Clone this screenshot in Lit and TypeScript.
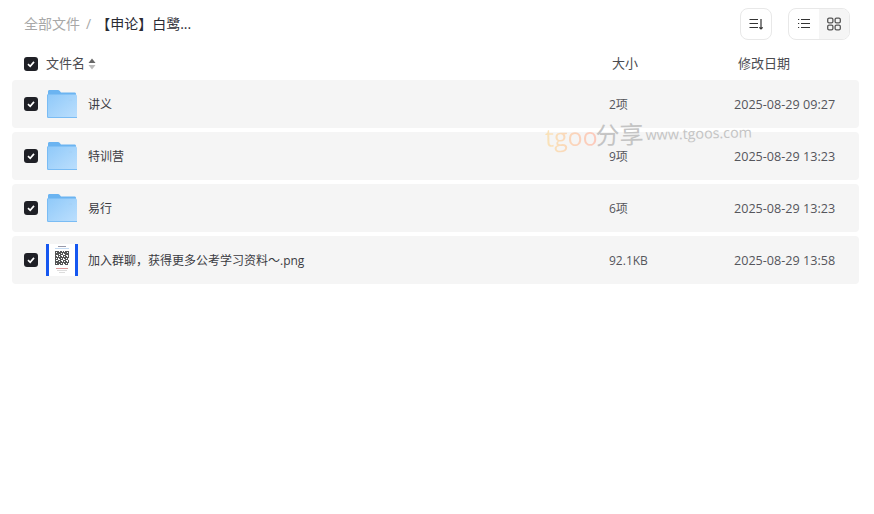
import { LitElement, html, css, svg } from "lit";
import { customElement } from "lit/decorators.js";

const rows = [
  { name: "讲义", size: "2项", date: "2025-08-29 09:27", kind: "folder" },
  { name: "特训营", size: "9项", date: "2025-08-29 13:23", kind: "folder" },
  { name: "易行", size: "6项", date: "2025-08-29 13:23", kind: "folder" },
  { name: "加入群聊，获得更多公考学习资料～.png", size: "92.1KB", date: "2025-08-29 13:58", kind: "image" },
];

const qrCells = () => {
  const out = [];
  const n = 14;
  for (let y = 0; y < n; y++) {
    for (let x = 0; x < n; x++) {
      const finder = (x < 4 && y < 4) || (x > 9 && y < 4) || (x < 4 && y > 9);
      const on = finder
        ? !(x === 1 && y === 1) && !(x === 12 && y === 1) && !(x === 1 && y === 12)
        : (x * 7 + y * 5 + x * y * 3) % 5 < 3;
      if (on) out.push(svg`<rect x=${9 + x} y=${7 + y} width="1" height="1" fill="#555"></rect>`);
    }
  }
  return out;
};

@customElement("app-root")
export class AppRoot extends LitElement {
  static styles = css`
    :host {
      display: block;
      position: relative;
      width: 874px;
      height: 514px;
      overflow: hidden;
      background: #fff;
      font-family: "Open Sans", "Noto Sans CJK SC", sans-serif;
      font-size: 13px;
      color: #25262b;
    }
    .page {
      display: flex;
      flex-direction: column;
      padding: 8px 15px 0 12px;
    }
    .toolbar {
      display: flex;
      align-items: center;
      height: 32px;
      padding-left: 12px;
    }
    .crumbs {
      display: flex;
      align-items: center;
      flex: 1;
      font-size: 14px;
      line-height: 32px;
    }
    .root { color: #a8a8a8; }
    .sep { color: #a8a8a8; margin: 0 5px 0 6px; }
    .current { color: #2a2b33; }
    .btn {
      display: flex;
      align-items: center;
      justify-content: center;
      width: 30px;
      height: 30px;
      border: 1px solid #e8e8e8;
      border-radius: 8px;
      background: #fff;
    }
    .switch {
      display: flex;
      width: 60px;
      height: 30px;
      margin-left: 16px;
      margin-right: 9px;
      border: 1px solid #e8e8e8;
      border-radius: 8px;
      overflow: hidden;
    }
    .switch > div {
      display: flex;
      align-items: center;
      justify-content: center;
      width: 30px;
    }
    .switch .off { background: #f5f5f5; }
    .head {
      display: grid;
      grid-template-columns: 588px 126px 1fr;
      align-items: center;
      height: 32px;
      padding: 8px 0 0 12px;
      color: #4b4b50;
      line-height: 18px;
    }
    .head-text { margin-top: -2px; }
    .name-h { display: flex; align-items: center; }
    .check {
      display: flex;
      align-items: center;
      justify-content: center;
      flex: none;
      width: 14px;
      height: 14px;
      border-radius: 3px;
      background: #1f2026;
    }
    .name-h span { margin-left: 8px; }
    .sort { margin-left: 3px; }
    .list { display: flex; flex-direction: column; gap: 4px; }
    .row {
      display: grid;
      grid-template-columns: 585px 125px 1fr;
      align-items: center;
      height: 48px;
      padding-left: 12px;
      background: #f5f5f5;
      border-radius: 4px;
      font-size: 12px;
      line-height: 18px;
    }
    .cell { display: flex; align-items: center; }
    .thumb {
      display: flex;
      align-items: center;
      justify-content: center;
      width: 32px;
      height: 32px;
      margin: 0 10px 0 8px;
    }
    .name { color: #3a3b42; margin-top: 2px; }
    .meta { color: #55565c; margin-top: 2px; }
    .date { font-size: 12.6px; }
    .mark {
      position: absolute;
      left: 545px;
      top: 116px;
      display: flex;
      align-items: center;
      transform: rotate(-1.5deg);
      white-space: nowrap;
      pointer-events: none;
    }
    .tg {
      font-size: 25px;
      line-height: 36px;
      background: linear-gradient(90deg, #f9e3b8, #fcc8bc);
      -webkit-background-clip: text;
      background-clip: text;
      color: transparent;
    }
    .fx { font-size: 24px; line-height: 36px; color: #c4c4c4; margin-left: -2px; }
    .url { font-size: 14.3px; color: #c4c4c4; margin-left: 2px; }
  `;

  private check() {
    return html`<div class="check">
      <svg width="10" height="10" viewBox="0 0 10 10"><path d="M2 5.2 4.2 7.3 8 2.9" fill="none" stroke="#fff" stroke-width="1.7"></path></svg>
    </div>`;
  }

  private folder() {
    return html`<svg width="30" height="28" viewBox="0 0 30 28">
      <defs>
        <linearGradient id="fg" x1="0" y1="0" x2="1" y2="1">
          <stop offset="0" stop-color="#8fc9f9"></stop>
          <stop offset="1" stop-color="#bcdffd"></stop>
        </linearGradient>
      </defs>
      <path d="M1 1.5C1 .7 1.6 0 2.4 0H11c.7 0 1.2.3 1.6.8L14 2.5H27.6c.8 0 1.4.6 1.4 1.4V10H1Z" fill="#6bb4f1"></path>
      <path d="M0 4.5H28.5c.8 0 1.5.7 1.5 1.5V26.5c0 .8-.7 1.5-1.5 1.5H1.5C.7 28 0 27.3 0 26.5Z" fill="url(#fg)"></path>
      <path d="M0 4.5V26.5C0 27.3.7 28 1.5 28H30V27H2C1.4 27 1 26.6 1 26V5Z" fill="#7abcf4"></path>
      <rect x="22" y="9" width="3" height="2" fill="#a5d2f8"></rect>
    </svg>`;
  }

  private poster() {
    return html`<svg width="32" height="32" viewBox="0 0 32 32">
      <rect width="32" height="32" fill="#fff"></rect>
      <rect width="3" height="32" fill="#1557f0"></rect>
      <rect x="29" width="3" height="32" fill="#1557f0"></rect>
      <rect x="12" y="2" width="8" height="1" fill="#99a"></rect>
      <rect x="9" y="4" width="14" height="1" fill="#c4daf2"></rect>
      ${qrCells()}
      <rect x="10" y="24" width="12" height="1" fill="#d99"></rect>
      <rect x="11" y="26" width="10" height="1" fill="#ddd"></rect>
      <rect x="13" y="28" width="6" height="1" fill="#ddd"></rect>
    </svg>`;
  }

  render() {
    return html`
      <div class="page">
        <div class="toolbar">
          <div class="crumbs">
            <span class="root">全部文件</span><span class="sep">/</span><span class="current">【申论】白鹭...</span>
          </div>
          <div class="btn">
            <svg width="16" height="16" viewBox="0 0 16 16" fill="none" stroke="#333" stroke-width="1.2">
              <path d="M1.5 3.5H10M1.5 7.5H10M1.5 11.5H10"></path>
              <path d="M13 3V13M11.3 11.3 13 13 14.7 11.3"></path>
            </svg>
          </div>
          <div class="switch">
            <div>
              <svg width="16" height="16" viewBox="0 0 16 16" fill="none" stroke="#333" stroke-width="1.2">
                <path d="M5 3.5H14M5 7.5H14M5 11.5H14M2 3.5H3.2M2 7.5H3.2M2 11.5H3.2"></path>
              </svg>
            </div>
            <div class="off">
              <svg width="16" height="16" viewBox="0 0 16 16" fill="none" stroke="#555" stroke-width="1.3">
                <rect x="1.7" y="2.2" width="5.2" height="4.6" rx="1.4"></rect>
                <rect x="9.1" y="2.2" width="5.2" height="4.6" rx="1.4"></rect>
                <rect x="1.7" y="9.2" width="5.2" height="4.6" rx="1.4"></rect>
                <rect x="9.1" y="9.2" width="5.2" height="4.6" rx="1.4"></rect>
              </svg>
            </div>
          </div>
        </div>
        <div class="head">
          <div class="name-h">
            ${this.check()}<span class="head-text">文件名</span>
            <svg class="sort" width="8" height="12" viewBox="0 0 8 12">
              <path d="M4 .5 7.5 5H.5Z" fill="#666"></path>
              <path d="M4 11.5 7.5 7H.5Z" fill="#bbb"></path>
            </svg>
          </div>
          <div class="head-text">大小</div>
          <div class="head-text">修改日期</div>
        </div>
        <div class="list">
          ${rows.map(
            (r) => html`<div class="row">
              <div class="cell">
                ${this.check()}
                <div class="thumb">${r.kind === "folder" ? this.folder() : this.poster()}</div>
                <span class="name">${r.name}</span>
              </div>
              <div class="meta">${r.size}</div>
              <div class="meta date">${r.date}</div>
            </div>`
          )}
        </div>
      </div>
      <div class="mark">
        <span class="tg">tgoo</span><span class="fx">分享</span><span class="url">www.tgoos.com</span>
      </div>
    `;
  }
}
